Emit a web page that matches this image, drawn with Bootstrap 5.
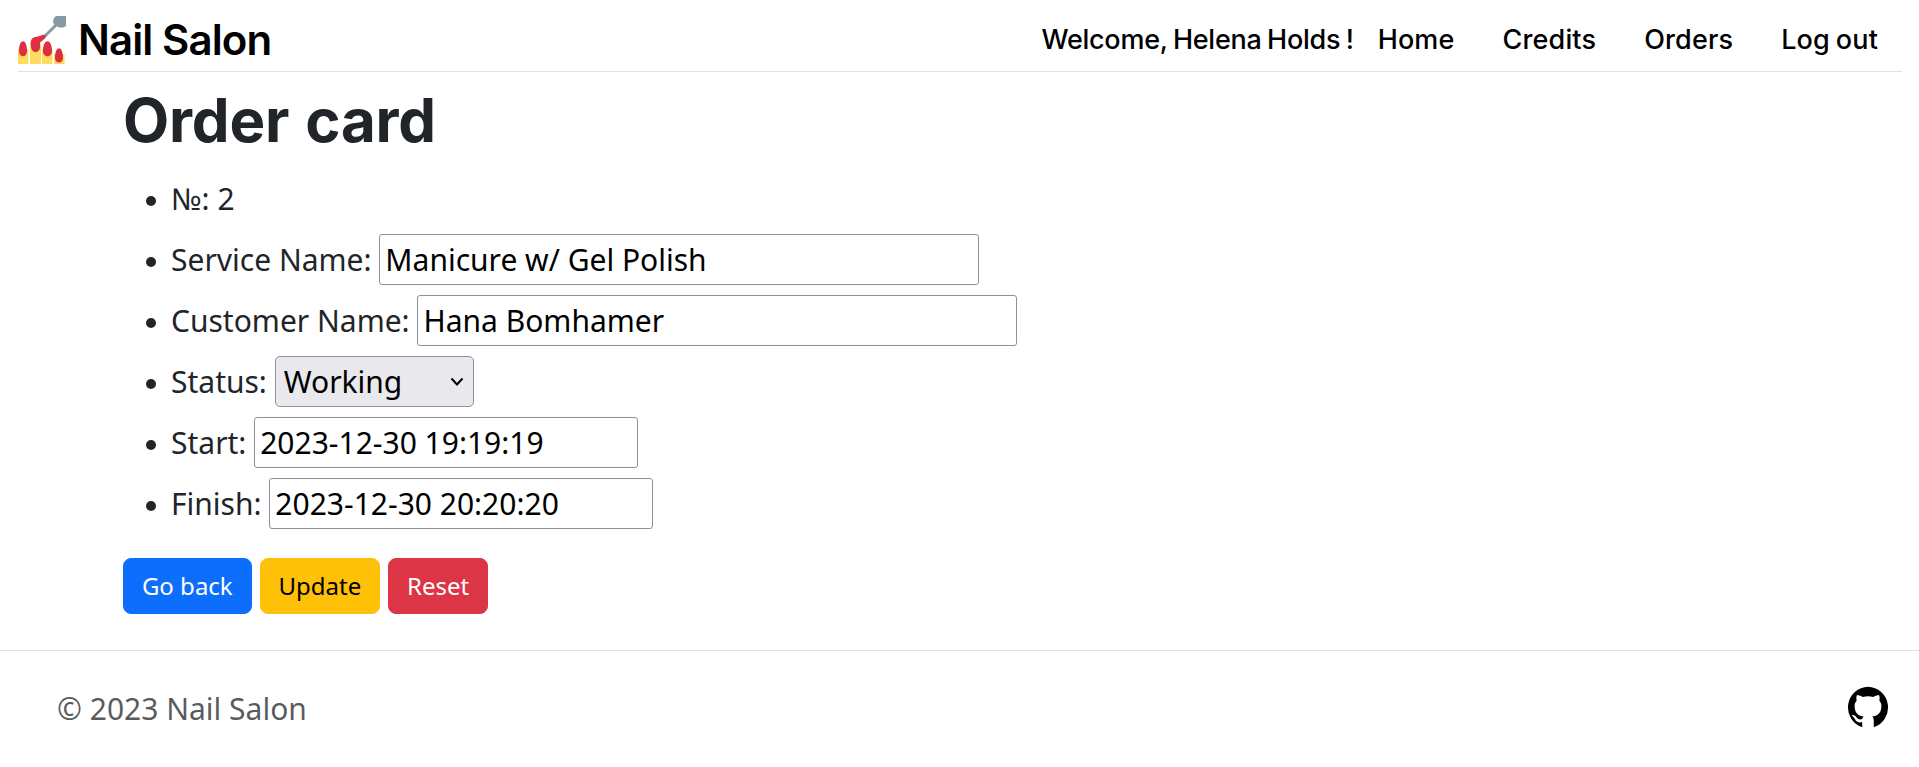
<!DOCTYPE html>
<html lang="en">
<head>
<meta charset="utf-8">
<meta name="viewport" content="width=device-width, initial-scale=1">
<title>Nail Salon</title>
<link href="https://cdn.jsdelivr.net/npm/bootstrap@5.3.0/dist/css/bootstrap.min.css" rel="stylesheet">
<style>
body { font-family: "Noto Sans", sans-serif; font-size: 30px; line-height: 45px; background: #fff; color: #212529; }
.site-header { margin: 0 17px 0 18px; height: 72px; border-color: #dee2e6; }
.brand-name { font: 600 42px/48px Inter, sans-serif; letter-spacing: -.9px; margin-left: 12px; }
.site-nav { font: 500 27px/40px Inter, sans-serif; gap: 48px; padding-right: 24px; letter-spacing: .15px; word-spacing: -1.5px; }
.welcome { margin-right: -24px; letter-spacing: -.25px; }
.order-page { padding: 16px 0 36px 123px; }
.order-page h1 { font: 700 60px/72px Inter, sans-serif; letter-spacing: -.2px; word-spacing: 2px; margin: -4px 0 12px; }
.order-list { padding-left: 48px; margin: 0 0 24px; list-style: none; }
.order-list li { height: 61px; line-height: 61px; white-space: nowrap; }
.order-list li::before { content: ""; display: inline-block; width: 10px; height: 10px; margin: 0 15px 0 -25px; border-radius: 50%; background: #212529; vertical-align: 4px; }
.field { height: 51px; border: 1px solid #8f8f9d; border-radius: 3px; padding: 1px 5px; color: #000; background: #fff; line-height: 45px; }
.field-wide { width: 600px; }
.field-date { width: 384px; }
.status-select { width: 199px; border-radius: 5px; background: #e9e9ed url("data:image/svg+xml,%3Csvg xmlns='http://www.w3.org/2000/svg' viewBox='0 0 14 10'%3E%3Cpath d='M1.5 1.500 7 7.500l5.500-6' fill='none' stroke='%23000' stroke-width='2'/%3E%3C/svg%3E") no-repeat right 9px center / 14px 10px; appearance: none; padding-left: 8px; }
.order-page .btn { font-size: 24px; line-height: 36px; padding: 9px 17.9px; border-radius: 8px; }
.site-footer { border-color: #dee2e6; padding: 35px 30px 0 57px; height: 117px; color: rgba(33,37,41,.75); }
</style>
</head>
<body>
<header class="site-header d-flex align-items-center justify-content-between border-bottom">
  <a href="#" class="d-flex align-items-center text-black text-decoration-none pb-2 pt-3 mb-1 mt-1">
    <svg width="48" height="48" viewBox="0 0 48 48" aria-hidden="true">
      <path fill="#ffdc5d" d="M0 33h10.500v15H0zM12 28h11v20H12zM24 33h10.500v15H24zM36 38h10.500v10H36z"/>
      <path d="M24 23 40 7" stroke="#8899a6" stroke-width="3"/>
      <path fill="#8899a6" d="M38 0h10v10q-4 3-8 1l-2-1q-3-2-3-5 0-3 3-5z"/>
      <path fill="#dd2e44" d="M27 19c-2-1-5 2-10 2-4 1-5 5-4 9 0 8 9 8 9 1 0-4 0-5 2-6l4-4zM1 35c0-13 8-13 8 0 0 7-8 7-8 0zM25 35c0-13 9-13 9 0 0 7-9 7-9 0zM37 42c0-13 8-13 8 0 0 6-8 6-8 0z"/>
    </svg>
    <span class="brand-name">Nail Salon</span>
  </a>
  <nav class="site-nav d-flex pt-2">
    <span class="welcome text-black">Welcome, Helena Holds !</span>
    <a class="text-black text-decoration-none" href="#">Home</a>
    <a class="text-black text-decoration-none" href="#">Credits</a>
    <a class="text-black text-decoration-none" href="#">Orders</a>
    <a class="text-black text-decoration-none" href="#">Log out</a>
  </nav>
</header>
<main class="order-page">
  <h1>Order card</h1>
  <form>
    <ul class="order-list">
      <li>№: 2</li>
      <li><label for="service">Service Name:</label> <input id="service" class="field field-wide" value="Manicure w/ Gel Polish"></li>
      <li><label for="customer">Customer Name:</label> <input id="customer" class="field field-wide" value="Hana Bomhamer"></li>
      <li><label for="status">Status:</label> <select id="status" class="field status-select"><option>Working</option></select></li>
      <li><label for="start">Start:</label> <input id="start" class="field field-date" value="2023-12-30 19:19:19"></li>
      <li><label for="finish">Finish:</label> <input id="finish" class="field field-date" value="2023-12-30 20:20:20"></li>
    </ul>
    <div class="d-flex gap-2">
      <a href="#" class="btn btn-primary">Go back</a>
      <button type="submit" class="btn btn-warning">Update</button>
      <button type="reset" class="btn btn-danger">Reset</button>
    </div>
  </form>
</main>
<footer class="site-footer d-flex justify-content-between align-items-start border-top">
  <span>© 2023 Nail Salon</span>
  <a href="#" class="text-black d-flex" aria-label="GitHub">
    <svg width="42" height="42" viewBox="0 0 16 16" fill="currentColor"><path d="M8 .3a7.900 7.900 0 0 0-2.200 15.400V13.800c-2 .3-2.500-.6-2.800-1.200-.2-.5-.5-.8-.9-1.100-.3-.2-.3-.5.100-.5.700 0 1.200.5 1.500 1 .6.800 1.300.9 2.100.6.100-.5.300-.8.600-1-1.900-.2-3.500-1.200-3.500-3.900 0-.9.300-1.600.8-2.200-.2-.6-.2-1.300.1-2.100.8 0 1.600.4 2.200.8a7.500 7.500 0 0 1 4 0c.6-.4 1.400-.8 2.200-.8.3.8.3 1.500.1 2.100.5.600.8 1.300.8 2.200 0 2.700-1.600 3.700-3.500 3.900.4.300.6.900.6 1.700v2.400A7.900 7.900 0 0 0 8 .3"/></svg>
  </a>
</footer>
<script src="https://cdn.jsdelivr.net/npm/bootstrap@5.3.0/dist/js/bootstrap.bundle.min.js"></script>
</body>
</html>
